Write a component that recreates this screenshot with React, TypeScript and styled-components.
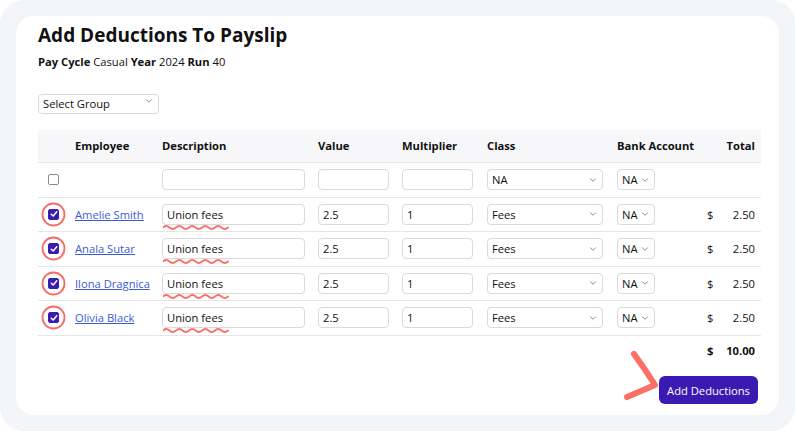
import { createGlobalStyle, styled } from "styled-components";
import { ChevronDown } from "lucide-react";

const GlobalStyle = createGlobalStyle`
  html, body {
    margin: 0;
    padding: 0;
    background: #ffffff;
    font-family: "Open Sans", "Noto Sans", sans-serif;
    color: #111;
  }
`;

const Frame = styled.div`
  width: 795px;
  height: 431px;
  box-sizing: border-box;
  padding: 16px;
  background: #f4f5f8;
  border-radius: 24px;
`;

const Card = styled.div`
  height: 100%;
  box-sizing: border-box;
  background: #fff;
  border-radius: 18px;
  padding: 6px 18px 0 22px;
  display: flex;
  flex-direction: column;
`;

const Title = styled.h1`
  margin: 0;
  font-size: 19px;
  font-weight: 700;
  line-height: 26px;
`;

const Meta = styled.p`
  margin: 6px 0 0;
  font-size: 11.2px;
  line-height: 15px;
  b {
    font-weight: 700;
  }
`;

const SelectWrap = styled.div<{ $w: number; $h: number }>`
  position: relative;
  width: ${(p) => p.$w}px;
  height: ${(p) => p.$h}px;
`;

const Select = styled.select`
  appearance: none;
  width: 100%;
  height: 100%;
  box-sizing: border-box;
  border: 1px solid #d9d9de;
  border-radius: 4px;
  background: #fff;
  font-family: inherit;
  font-size: 11.2px;
  color: #111;
  padding: 0 4px;
  outline: none;
`;

const Chevron = styled(ChevronDown)`
  position: absolute;
  right: 5px;
  top: 50%;
  margin-top: -5px;
  pointer-events: none;
  color: #444;
`;

const GroupRow = styled.div`
  margin-top: 22px;
`;

const Table = styled.table`
  margin-top: 19px;
  width: 723px;
  border-collapse: collapse;
  table-layout: fixed;
  font-size: 11.2px;
`;

const Th = styled.th<{ $w?: number; $right?: boolean }>`
  ${(p) => (p.$w ? `width: ${p.$w}px;` : "")}
  height: 32px;
  box-sizing: border-box;
  background: #f7f7f9;
  text-align: ${(p) => (p.$right ? "right" : "left")};
  padding: 0 ${(p) => (p.$right ? "6px" : "0")} 0 8px;
  font-weight: 700;
  border-bottom: 1px solid #e6e6ea;
`;

const Tr = styled.tr<{ $h: number }>`
  height: ${(p) => p.$h}px;
  border-bottom: 1px solid #e6e6ea;
  &:last-child {
    border-bottom: none;
  }
`;

const Td = styled.td<{ $pl?: number }>`
  padding: 0 0 0 ${(p) => p.$pl ?? 8}px;
  vertical-align: middle;
`;

const CheckCell = styled.div`
  position: relative;
  width: 11px;
  height: 11px;
`;

const Box = styled.div<{ $on: boolean }>`
  width: 11px;
  height: 11px;
  box-sizing: border-box;
  border-radius: 2px;
  border: 1px solid ${(p) => (p.$on ? "#3a1db0" : "#8a8a90")};
  background: ${(p) => (p.$on ? "#3a1db0" : "#fff")};
  display: flex;
  align-items: center;
  justify-content: center;
`;

const Ring = styled.svg`
  position: absolute;
  left: -7px;
  top: -7px;
  pointer-events: none;
`;

const Link = styled.a`
  color: #3a5bd9;
  text-decoration: underline;
  white-space: nowrap;
`;

const Input = styled.input<{ $w: number }>`
  width: ${(p) => p.$w}px;
  height: 21px;
  box-sizing: border-box;
  border: 1px solid #d9d9de;
  border-radius: 4px;
  padding: 0 4px;
  font-family: inherit;
  font-size: 11.2px;
  color: #111;
  outline: none;
`;

const DescWrap = styled.div`
  position: relative;
  width: 143px;
`;

const Wave = styled.svg`
  position: absolute;
  left: 1px;
  top: 20px;
  pointer-events: none;
`;

const Money = styled.div<{ $bold?: boolean }>`
  display: flex;
  justify-content: space-between;
  padding-right: 6px;
  font-weight: ${(p) => (p.$bold ? 700 : 400)};
`;

const Footer = styled.div`
  margin-top: 11px;
  display: flex;
  justify-content: flex-end;
  padding-right: 3px;
`;

const ButtonWrap = styled.div`
  position: relative;
`;

const Button = styled.button`
  height: 28px;
  width: 99px;
  padding: 0;
  border: 0;
  border-radius: 6px;
  background: #3b1ab3;
  color: #fff;
  font-family: inherit;
  font-size: 11.2px;
  white-space: nowrap;
  cursor: pointer;
`;

const Arrow = styled.svg`
  position: absolute;
  left: -38px;
  top: -25px;
  pointer-events: none;
`;

type Row = { name: string; desc: string; value: string; mult: string; cls: string; total: string };

const rows: Row[] = [
  { name: "Amelie Smith", desc: "Union fees", value: "2.5", mult: "1", cls: "Fees", total: "2.50" },
  { name: "Anala Sutar", desc: "Union fees", value: "2.5", mult: "1", cls: "Fees", total: "2.50" },
  { name: "Ilona Dragnica", desc: "Union fees", value: "2.5", mult: "1", cls: "Fees", total: "2.50" },
  { name: "Olivia Black", desc: "Union fees", value: "2.5", mult: "1", cls: "Fees", total: "2.50" },
];

function Dropdown({ w, h = 21, value }: { w: number; h?: number; value: string }) {
  return (
    <SelectWrap $w={w} $h={h}>
      <Select defaultValue={value}>
        <option>{value}</option>
      </Select>
      <Chevron size={10} strokeWidth={1.5} />
    </SelectWrap>
  );
}

function Check({ on, ring }: { on: boolean; ring?: boolean }) {
  return (
    <CheckCell>
      <Box $on={on}>
        {on && (
          <svg width="8" height="8" viewBox="0 0 8 8">
            <path d="M1.3 4.2 L3.2 6 L6.8 1.8" fill="none" stroke="#fff" strokeWidth="1.5" strokeLinecap="round" strokeLinejoin="round" />
          </svg>
        )}
      </Box>
      {ring && (
        <Ring width="25" height="25" viewBox="0 0 25 25">
          <circle cx="12.5" cy="12.5" r="11" fill="none" stroke="#f66b65" strokeWidth="1.8" />
        </Ring>
      )}
    </CheckCell>
  );
}

export default function App() {
  return (
    <>
      <GlobalStyle />
      <Frame>
        <Card>
          <Title>Add Deductions To Payslip</Title>
          <Meta>
            <b>Pay Cycle</b> Casual <b>Year</b> 2024 <b>Run</b> 40
          </Meta>
          <GroupRow>
            <Dropdown w={121} h={20} value="Select Group" />
          </GroupRow>
          <Table>
            <thead>
              <tr>
                <Th $w={29}></Th>
                <Th $w={87}>Employee</Th>
                <Th $w={156}>Description</Th>
                <Th $w={84}>Value</Th>
                <Th $w={85}>Multiplier</Th>
                <Th $w={130}>Class</Th>
                <Th $w={90}>Bank Account</Th>
                <Th $right>Total</Th>
              </tr>
            </thead>
            <tbody>
              <Tr $h={35}>
                <Td $pl={10}>
                  <Check on={false} />
                </Td>
                <Td></Td>
                <Td>
                  <Input $w={143} defaultValue="" />
                </Td>
                <Td>
                  <Input $w={71} defaultValue="" />
                </Td>
                <Td>
                  <Input $w={71} defaultValue="" />
                </Td>
                <Td>
                  <Dropdown w={116} value="NA" />
                </Td>
                <Td>
                  <Dropdown w={38} value="NA" />
                </Td>
                <Td></Td>
              </Tr>
              {rows.map((r) => (
                <Tr $h={34.5} key={r.name}>
                  <Td $pl={10}>
                    <Check on ring />
                  </Td>
                  <Td>
                    <Link href="#">{r.name}</Link>
                  </Td>
                  <Td>
                    <DescWrap>
                      <Input $w={143} defaultValue={r.desc} />
                      <Wave width="66" height="7" viewBox="0 0 66 7">
                        <path
                          d="M0 3.5 q3.25 -3 6.5 0 t6.5 0 t6.5 0 t6.5 0 t6.5 0 t6.5 0 t6.5 0 t6.5 0 t6.5 0 t6.5 0"
                          fill="none"
                          stroke="#fb6f66"
                          strokeWidth="1.8"
                          strokeLinecap="round"
                        />
                      </Wave>
                    </DescWrap>
                  </Td>
                  <Td>
                    <Input $w={71} defaultValue={r.value} />
                  </Td>
                  <Td>
                    <Input $w={71} defaultValue={r.mult} />
                  </Td>
                  <Td>
                    <Dropdown w={116} value={r.cls} />
                  </Td>
                  <Td>
                    <Dropdown w={38} value="NA" />
                  </Td>
                  <Td>
                    <Money>
                      <span>$</span>
                      <span>{r.total}</span>
                    </Money>
                  </Td>
                </Tr>
              ))}
              <Tr $h={30}>
                <Td colSpan={7}></Td>
                <Td>
                  <Money $bold>
                    <span>$</span>
                    <span>10.00</span>
                  </Money>
                </Td>
              </Tr>
            </tbody>
          </Table>
          <Footer>
            <ButtonWrap>
              <Arrow width="40" height="52" viewBox="0 0 40 52">
                <path
                  d="M13 3 Q24 18 34 34 Q20 40 6 46"
                  fill="none"
                  stroke="#fb6f66"
                  strokeWidth="6"
                  strokeLinecap="round"
                  strokeLinejoin="round"
                />
              </Arrow>
              <Button>Add Deductions</Button>
            </ButtonWrap>
          </Footer>
        </Card>
      </Frame>
    </>
  );
}
